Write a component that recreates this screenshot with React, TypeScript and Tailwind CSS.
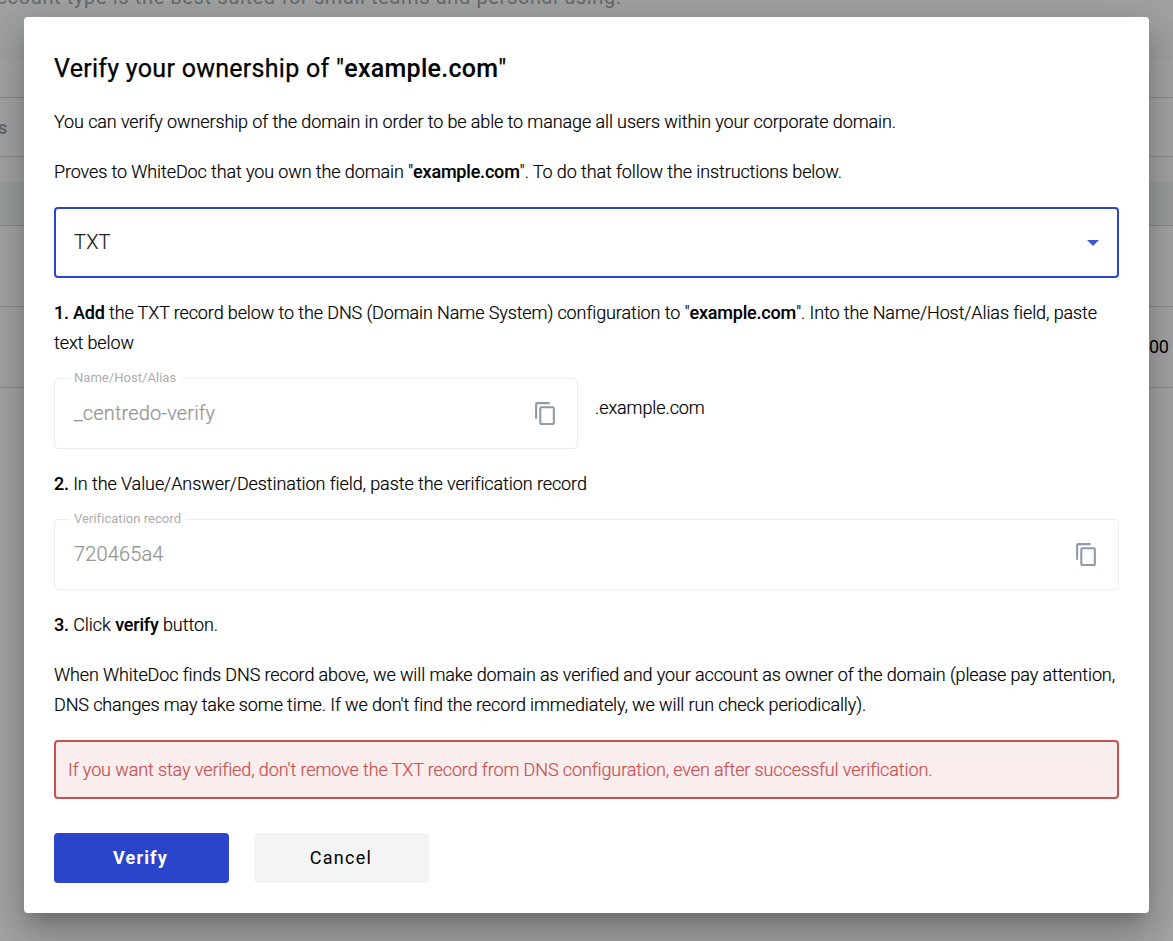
import React from "react";

function CopyIcon() {
  return (
    <svg viewBox="0 0 24 24" className="size-[25px] fill-[#9399a4]">
      <path d="M16 1H4c-1.1 0-2 .9-2 2v14h2V3h12V1zm3 4H8c-1.1 0-2 .9-2 2v14c0 1.1.9 2 2 2h11c1.1 0 2-.9 2-2V7c0-1.100-.9-2-2-2zm0 16H8V7h11v14z" />
    </svg>
  );
}

function Field({ label, value, className }: { label: string; value: string; className: string }) {
  return (
    <div className={`relative flex h-[71px] items-center justify-between rounded border border-[#ededee] pl-[19px] pr-[19px] ${className}`}>
      <span className="absolute -top-[9px] left-[14px] bg-white px-[5px] text-[13px] font-normal leading-4 tracking-[0.04px] text-[#adadad]">{label}</span>
      <span className="pb-0.5 text-[20px] font-light tracking-[0.15px] text-[#949494] [-webkit-text-stroke:0.2px]">{value}</span>
      <CopyIcon />
    </div>
  );
}

export default function App() {
  return (
    <div className="relative h-[941px] w-[1173px] overflow-hidden bg-[#a5a5a5] font-[Roboto,sans-serif] text-[18px] font-light text-black">
      <div className="flex h-full flex-col">
        <div className="h-[59px] bg-[#a1a3a3]" />
        <div className="h-[39px] border-b border-[#8b8b8b]" />
        <div className="h-[59px] border-b border-[#8b8b8b]" />
        <div className="h-[25px]" />
        <div className="h-[44px] border-b border-[#8b8b8b] bg-[#9c9f9f]" />
        <div className="h-[81px] border-b border-[#8b8b8b]" />
        <div className="h-[81px] border-b border-[#8b8b8b]" />
      </div>
      <span className="absolute -left-[15px] -top-[15px] whitespace-nowrap text-[20px] font-normal leading-6 tracking-[0.63px] text-[#666a6b]">account type is the best suited for small teams and personal using.</span>
      <span className="absolute -left-[2px] top-[116px] font-bold leading-6 text-[#66696e]">s</span>
      <span className="absolute left-[1149px] top-[335px] font-normal leading-6 tracking-[-0.3px]">00</span>
      <main className="absolute left-6 top-[17px] flex h-[896px] w-[1125px] flex-col rounded bg-white px-[30px] leading-[30px] tracking-[-0.11px] shadow-[0_11px_15px_-7px_rgba(0,0,0,0.2),0_24px_38px_3px_rgba(0,0,0,0.14),0_9px_46px_8px_rgba(0,0,0,0.12)] [&_b]:font-medium [&_p]:[-webkit-text-stroke:0.2px] [&_b]:[-webkit-text-stroke:0.1px] [&_p_b]:tracking-[-0.2px]">
        <h1 className="mt-[35px] h-8 text-[25px] font-normal leading-[33px] tracking-[0.28px] [-webkit-text-stroke:0.25px]">Verify your ownership of "<b>example.com</b>"</h1>
        <p className="mt-[23px]">You can verify ownership of the domain in order to be able to manage all users within your corporate domain.</p>
        <p className="mt-5">Proves to WhiteDoc that you own the domain "<b>example.com</b>". To do that follow the instructions below.</p>
        <div className="mt-5 flex h-[71px] items-center justify-between rounded border-2 border-[#2a45c9] pl-[18px] pr-[18px] text-[20px] tracking-[0.2px] text-[#222]">
          <span className="pb-px [-webkit-text-stroke:0.2px]">TXT</span>
          <svg viewBox="0 0 12 6" className="h-[6px] w-3 fill-[#4059cf]"><path d="M0 0h12L6 6z" /></svg>
        </div>
        <p className="mt-5"><b>1. Add</b> the TXT record below to the DNS (Domain Name System) configuration to "<b>example.com</b>". Into the Name/Host/Alias field, paste text below</p>
        <div className="mt-5 flex">
          <Field label="Name/Host/Alias" value="_centredo-verify" className="w-[524px]" />
          <p className="ml-[17px] mt-[15px]">.example.com</p>
        </div>
        <p className="mt-5 tracking-[-0.09px]"><b>2.</b> In the Value/Answer/Destination field, paste the verification record</p>
        <Field label="Verification record" value="720465a4" className="mt-5 w-full" />
        <p className="mt-5 tracking-[-0.05px]"><b>3.</b> Click <b>verify</b> button.</p>
        <p className="mt-5 tracking-[-0.12px]">When WhiteDoc finds DNS record above, we will make domain as verified and your account as owner of the domain (please pay attention, DNS changes may take some time. If we don't find the record immediately, we will run check periodically).</p>
        <div className="mt-5 flex h-[59px] items-center rounded border-2 border-[#c95151] bg-[#f9eded] px-3 text-[#c95151]">
          <p>If you want stay verified, don't remove the TXT record from DNS configuration, even after successful verification.</p>
        </div>
        <div className="mt-[34px] flex gap-[25px]">
          <button className="h-[50px] w-[175px] rounded bg-[#2a45c9] pr-0.5 font-bold tracking-[1.15px] text-white">Verify</button>
          <button className="h-[50px] w-[175px] rounded bg-[#f3f4f6] pr-px font-normal tracking-[1.3px]">Cancel</button>
        </div>
      </main>
    </div>
  );
}
